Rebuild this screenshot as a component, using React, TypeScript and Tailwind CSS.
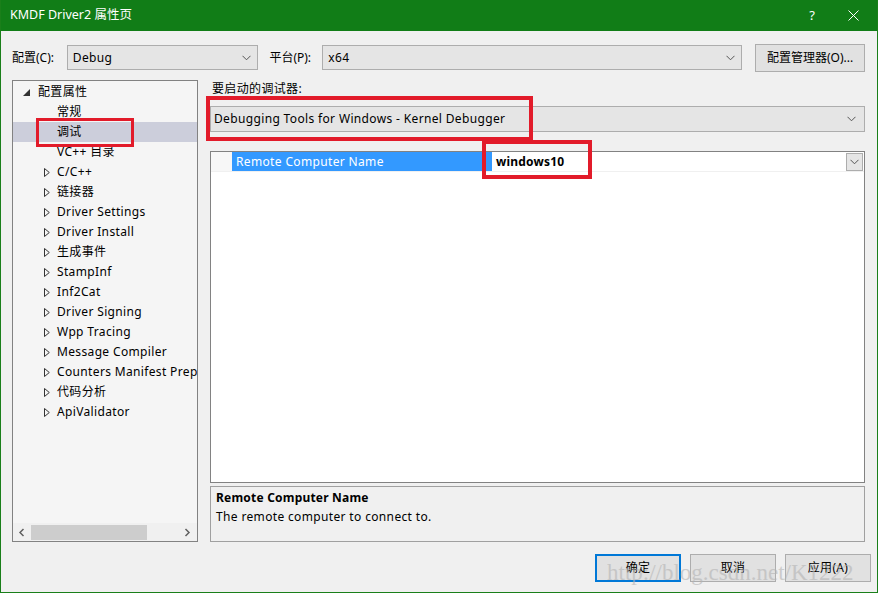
import React from "react";

const FONT = { fontFamily: '"Noto Sans", "Noto Sans CJK SC", sans-serif' };

const Chevron = ({ className = "" }: { className?: string }) => (
  <svg width="9" height="6" viewBox="0 0 9 6" className={className}>
    <path d="M0.5 0.8 L4.5 4.8 L8.5 0.8" fill="none" stroke="#555" strokeWidth="1" />
  </svg>
);

const items: { label: string; arrow: boolean }[] = [
  { label: "常规", arrow: false },
  { label: "调试", arrow: false },
  { label: "VC++ 目录", arrow: false },
  { label: "C/C++", arrow: true },
  { label: "链接器", arrow: true },
  { label: "Driver Settings", arrow: true },
  { label: "Driver Install", arrow: true },
  { label: "生成事件", arrow: true },
  { label: "StampInf", arrow: true },
  { label: "Inf2Cat", arrow: true },
  { label: "Driver Signing", arrow: true },
  { label: "Wpp Tracing", arrow: true },
  { label: "Message Compiler", arrow: true },
  { label: "Counters Manifest Preprocessor", arrow: true },
  { label: "代码分析", arrow: true },
  { label: "ApiValidator", arrow: true },
];

const TreeItem = ({ label, arrow, selected }: { label: string; arrow: boolean; selected: boolean }) => (
  <div className={`h-[20px] flex items-center whitespace-nowrap ${selected ? "bg-[#cccedb]" : ""}`}>
    <div className="ml-[31px] w-[6px] flex items-center">
      {arrow && (
        <svg width="6" height="9" viewBox="0 0 6 9">
          <path d="M0.5 0.5 L5.3 4.5 L0.5 8.5 Z" fill="none" stroke="#333" strokeWidth="1" />
        </svg>
      )}
    </div>
    <span className="ml-[7px]">{label}</span>
  </div>
);

const Button = ({ children, primary }: { children: React.ReactNode; primary?: boolean }) => (
  <div
    className={`w-[86px] h-[28px] flex items-center justify-center bg-[#e1e1e1] ${
      primary ? "border-2 border-[#0078d7]" : "border border-[#adadad]"
    }`}
  >
    {children}
  </div>
);

export default function App() {
  return (
    <div
      className="w-[878px] h-[593px] bg-[#f0f0f0] text-[12px] tracking-[0.35px] text-black relative overflow-hidden border-x border-b border-[#1a7f1a]"
      style={FONT}
    >
      {/* title bar */}
      <div className="h-[31px] -mx-px bg-[#117d17] text-white flex items-center tracking-normal">
        <span className="ml-[10px] text-[12.5px]">KMDF Driver2 属性页</span>
        <span className="ml-auto mr-[33px] text-[13px]">?</span>
        <svg width="11" height="11" viewBox="0 0 11 11" className="mr-[19px]">
          <path d="M0.5 0.5 L10.5 10.5 M10.5 0.5 L0.5 10.5" stroke="white" strokeWidth="1" />
        </svg>
      </div>

      <div className="pl-[11px] pr-[12px]">
        {/* top row */}
        <div className="mt-[13px] flex items-center h-[27px]">
          <span className="w-[55px] tracking-normal">配置(C):</span>
          <div className="w-[192px] h-[25px] border border-[#adadad] bg-[#e5e5e5] flex items-center px-[5px]">
            <span>Debug</span>
            <Chevron className="ml-auto mr-[1px]" />
          </div>
          <span className="w-[53px] ml-[11px] tracking-normal">平台(P):</span>
          <div className="w-[421px] h-[25px] border border-[#adadad] bg-[#e5e5e5] flex items-center px-[5px]">
            <span>x64</span>
            <Chevron className="ml-auto mr-[1px]" />
          </div>
          <div className="ml-[13px] w-[110px] h-[28px] border border-[#adadad] bg-[#e1e1e1] flex items-center justify-center tracking-normal">
            配置管理器(O)...
          </div>
        </div>

        {/* main area */}
        <div className="mt-[9px] flex">
          {/* tree */}
          <div className="w-[186px] h-[462px] border border-[#828282] bg-[#f5f5f5] flex flex-col">
            <div className="flex-1 overflow-hidden pt-px">
              <div className="h-[20px] flex items-center whitespace-nowrap">
                <svg width="7" height="7" viewBox="0 0 7 7" className="ml-[10px]">
                  <path d="M7 0 L7 7 L0 7 Z" fill="#333" />
                </svg>
                <span className="ml-[8px]">配置属性</span>
              </div>
              {items.map((it) => (
                <TreeItem key={it.label} label={it.label} arrow={it.arrow} selected={it.label === "调试"} />
              ))}
            </div>
            <div className="h-[18px] flex items-center bg-[#f0f0f0]">
              <svg width="17" height="17" viewBox="0 0 17 17">
                <path d="M10.5 5 L7 8.5 L10.5 12" fill="none" stroke="#606060" strokeWidth="1.5" />
              </svg>
              <div className="w-[116px] h-[15px] bg-[#cdcdcd] ml-px" />
              <svg width="17" height="17" viewBox="0 0 17 17" className="ml-auto mr-[1px]">
                <path d="M6.5 5 L10 8.5 L6.5 12" fill="none" stroke="#606060" strokeWidth="1.5" />
              </svg>
            </div>
          </div>

          {/* right column */}
          <div className="ml-[12px] w-[656px] flex flex-col">
            <div className="h-[17px] flex items-center pl-[2px]">要启动的调试器:</div>
            <div className="mt-[9px] h-[26px] border border-[#adadad] bg-[#e5e5e5] flex items-center px-[3px]">
              <span>Debugging Tools for Windows - Kernel Debugger</span>
              <Chevron className="ml-auto mr-[5px]" />
            </div>
            <div className="mt-[19px] h-[332px] border border-[#828282] bg-white">
              <div className="h-[20px] flex border-b border-[#f0f0f0]">
                <div className="w-[21px] bg-[#f7f7f7]" />
                <div className="w-[257px] bg-[#3399ff] text-white flex items-center pl-[4px]">Remote Computer Name</div>
                <div className="w-[3px] bg-[#3399ff]" />
                <div className="flex-1 flex items-center pl-[4px] font-bold tracking-[0.2px]">windows10</div>
                <div className="w-[17px] h-[18px] mt-px mr-px border border-[#adadad] bg-[#e5e5e5] flex items-center justify-center">
                  <Chevron />
                </div>
              </div>
            </div>
            <div className="mt-[3px] h-[56px] border border-[#a0a0a0] bg-[#f0f0f0] pl-[5px] pt-px leading-[19px]">
              <div className="font-bold tracking-[0.2px]">Remote Computer Name</div>
              <div>The remote computer to connect to.</div>
            </div>
          </div>
        </div>

        {/* buttons */}
        <div className="mt-[12px] flex justify-end gap-[9px] mr-[-6px]">
          <Button primary>确定</Button>
          <Button>取消</Button>
          <Button>应用(A)</Button>
        </div>
      </div>

      {/* annotation boxes */}
      <div className="absolute left-[35px] top-[118px] w-[98px] h-[29px] border-[3px] border-[#e21b2a]" />
      <div className="absolute left-[205px] top-[96px] w-[327px] h-[45px] border-[4px] border-[#e21b2a]" />
      <div className="absolute left-[481px] top-[140px] w-[110px] h-[39px] border-[4px] border-[#e21b2a]" />

      {/* watermark */}
      <div
        className="absolute left-[606px] top-[556px] text-[23px] tracking-normal text-[#b4b4b4] opacity-60 whitespace-nowrap"
        style={{ fontFamily: '"Liberation Serif", serif' }}
      >
        http://blog.csdn.net/K1222
      </div>
    </div>
  );
}
